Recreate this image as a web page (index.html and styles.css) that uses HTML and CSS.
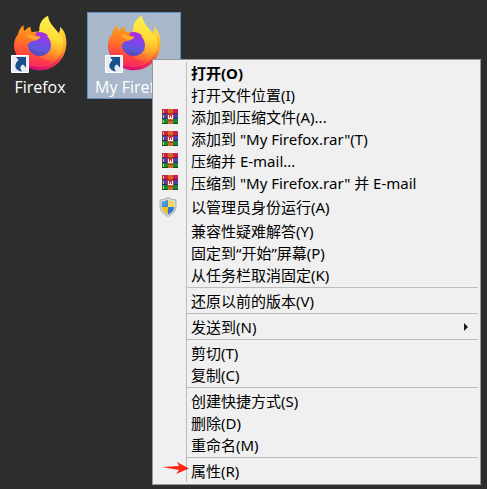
FILE: index.html
```html
<!DOCTYPE html>
<html lang="zh-CN">
<head>
<meta charset="utf-8">
<meta name="viewport" content="width=device-width, initial-scale=1">
<title>桌面</title>
<link rel="stylesheet" href="styles.css">
</head>
<body>
<svg class="defs" width="0" height="0" aria-hidden="true">
  <defs>
    <linearGradient id="fx-flame" gradientUnits="userSpaceOnUse" x1="160" y1="50" x2="110" y2="205">
      <stop offset="0" stop-color="#fff44f"/>
      <stop offset=".38" stop-color="#ffdc38"/>
      <stop offset=".6" stop-color="#ffa428"/>
      <stop offset=".8" stop-color="#ff5a38"/>
      <stop offset="1" stop-color="#fa2860"/>
    </linearGradient>
    <linearGradient id="fx-rim" gradientUnits="userSpaceOnUse" x1="190" y1="85" x2="120" y2="211">
      <stop offset="0" stop-color="#ffe23c"/>
      <stop offset=".4" stop-color="#ff9a25"/>
      <stop offset=".65" stop-color="#f8384e"/>
      <stop offset="1" stop-color="#da1070"/>
    </linearGradient>
    <linearGradient id="fx-orb" x1=".65" y1="0" x2=".4" y2="1">
      <stop offset="0" stop-color="#b52be0"/>
      <stop offset=".35" stop-color="#8740ea"/>
      <stop offset=".7" stop-color="#5f58e0"/>
      <stop offset="1" stop-color="#5a48b0"/>
    </linearGradient>
    <linearGradient id="fx-head" gradientUnits="userSpaceOnUse" x1="85" y1="80" x2="70" y2="190">
      <stop offset="0" stop-color="#ff9c1c"/>
      <stop offset=".35" stop-color="#ff7b24"/>
      <stop offset=".7" stop-color="#ff4c3c"/>
      <stop offset="1" stop-color="#fb2d58"/>
    </linearGradient>
    <linearGradient id="shield-blue" x1="0" y1="0" x2="1" y2="1">
      <stop offset="0" stop-color="#5da6e4"/>
      <stop offset="1" stop-color="#1766b8"/>
    </linearGradient>
    <symbol id="firefox" viewBox="36 42 168 171">
      <path fill="url(#fx-rim)" d="M150 70L176 99Q183 90 180 80C195 92 200 113 199 133C197 178 163 211 120 211C77 211 42 177 42 132L120 110Z"/>
      <path fill="url(#fx-flame)" d="M144 47C125 57 117 71 118 92L90 120L60 180C78 196 98 201 122 200C160 199 190 168 190 132C190 119 186 106 178 97Q181 106 179 112C171 82 148 78 144 47Z"/>
      <path fill="url(#fx-head)" d="M71 75Q57 85 54 103C44 114 41 127 43 143C49 178 84 201 122 200C136 198 148 191 157 181C140 186 128 180 118 168L90 110L95 96L94 95Q90 88 91 80Q81 83 73 93Q69 84 71 75Z"/>
      <circle cx="119" cy="132" r="36" fill="url(#fx-orb)"/>
      <path fill="url(#fx-flame)" d="M118 92C128 90 142 96 150 108Q144 109 139 106C151 117 156 133 151 149L166 135L152 95L130 86Z"/>
      <path fill="url(#fx-head)" d="M90 80L94 97Q106 95 114 94Q106 99 106 105Q110 110 120 109Q121 115 112 119Q107 122 100 123Q88 124 85 134L79 130L76 98Z"/>
      <path fill="#ffb832" d="M80 106Q90 101 100 107Q108 112 120 110Q121 115 112 118Q108 120 102 120Q97 114 88 114Q85 109 80 106Z" opacity=".75"/>
    </symbol>
    <symbol id="shortcut" viewBox="0 0 18 18">
      <path fill="#e9edf3" stroke="#fff" d="M.5.5h17v17H.5z"/>
      <path fill="#17508b" d="M5 2H15V12.5L12 9.5C9 11 8.6 13 11 16.5C4 15.500 2 10 7.500 5Z"/>
    </symbol>
    <symbol id="archive" viewBox="0 0 16 16">
      <path fill="#c8204f" d="M0 0h16v5H0z"/>
      <path fill="#4143ae" d="M0 5h16v5H0z"/>
      <path fill="#168637" d="M0 10h16v5H0z"/>
      <path fill="#811532" d="M0 4h16v1H0z"/>
      <path fill="#252474" d="M0 9h16v1H0z"/>
      <path fill="#08521c" d="M0 14h16v1H0z"/>
      <path fill="#efbd31" d="M1 1h1v3H1zM1 6h1v3H1zM1 11h1v3H1z"/>
      <path fill="#d86621" d="M6 0h5v15H6z"/>
      <path fill="#a94119" d="M6 4h5v1H6zM6 11h5v1H6z"/>
      <path fill="#c62e43" d="M5 5h7v5H5z"/>
      <path fill="#fff" d="M6 6h1v3h1V7h1v2h1V6h1v4H6z"/>
    </symbol>
    <symbol id="shield" viewBox="0 0 18 20">
      <path fill="#d5dce1" stroke="#8b989f" stroke-width=".7" d="M9 .5Q13 3 17 3V9Q17 16 9 19.5Q1 16 1 9V3Q5 3 9 .5Z"/>
      <path fill="url(#shield-blue)" d="M9 2.5V10H2.7V4.5Q6 4.3 9 2.5ZM9 10H15.3Q15 15 9 17.6Z"/>
      <path fill="#f9d65b" d="M9 2.5Q12 4.3 15.3 4.5V10H9Z"/>
      <path fill="#f2bd2d" d="M2.7 10H9V17.6Q3.5 15 2.7 10Z"/>
    </symbol>
  </defs>
</svg>

<main class="desktop">
  <button class="shortcut" type="button">
    <span class="picture">
      <svg class="logo"><use href="#firefox"/></svg>
      <svg class="badge"><use href="#shortcut"/></svg>
    </span>
    <span class="name">Firefox</span>
  </button>
  <button class="shortcut selected" type="button">
    <span class="picture">
      <svg class="logo"><use href="#firefox"/></svg>
      <svg class="badge"><use href="#shortcut"/></svg>
    </span>
    <span class="name">My Firefox</span>
  </button>
</main>

<div class="menu" role="menu">
  <div class="group">
    <button class="item default" role="menuitem"><span class="icon"></span><span class="label">打开(O)</span></button>
    <button class="item" role="menuitem"><span class="icon"></span><span class="label">打开文件位置(I)</span></button>
    <button class="item" role="menuitem"><span class="icon"><svg class="archive"><use href="#archive"/></svg></span><span class="label">添加到压缩文件(A)...</span></button>
    <button class="item" role="menuitem"><span class="icon"><svg class="archive"><use href="#archive"/></svg></span><span class="label">添加到 "My Firefox.rar"(T)</span></button>
    <button class="item" role="menuitem"><span class="icon"><svg class="archive"><use href="#archive"/></svg></span><span class="label">压缩并 E-mail...</span></button>
    <button class="item" role="menuitem"><span class="icon"><svg class="archive"><use href="#archive"/></svg></span><span class="label">压缩到 "My Firefox.rar" 并 E-mail</span></button>
    <button class="item tall" role="menuitem"><span class="icon"><svg class="shield"><use href="#shield"/></svg></span><span class="label">以管理员身份运行(A)</span></button>
    <button class="item" role="menuitem"><span class="icon"></span><span class="label">兼容性疑难解答(Y)</span></button>
    <button class="item" role="menuitem"><span class="icon"></span><span class="label">固定到“开始”屏幕(P)</span></button>
    <button class="item" role="menuitem"><span class="icon"></span><span class="label">从任务栏取消固定(K)</span></button>
  </div>
  <div class="group">
    <button class="item" role="menuitem"><span class="icon"></span><span class="label">还原以前的版本(V)</span></button>
  </div>
  <div class="group">
    <button class="item" role="menuitem" aria-haspopup="true"><span class="icon"></span><span class="label">发送到(N)</span><svg class="more" viewBox="0 0 4 8"><path d="M0 0L4 4L0 8Z" fill="#1b1b1b"/></svg></button>
  </div>
  <div class="group">
    <button class="item" role="menuitem"><span class="icon"></span><span class="label">剪切(T)</span></button>
    <button class="item" role="menuitem"><span class="icon"></span><span class="label">复制(C)</span></button>
  </div>
  <div class="group">
    <button class="item" role="menuitem"><span class="icon"></span><span class="label">创建快捷方式(S)</span></button>
    <button class="item" role="menuitem"><span class="icon"></span><span class="label">删除(D)</span></button>
    <button class="item" role="menuitem"><span class="icon"></span><span class="label">重命名(M)</span></button>
  </div>
  <div class="group">
    <button class="item" role="menuitem"><span class="icon"></span><span class="label">属性(R)</span><svg class="pointer" viewBox="0 0 27 12"><path d="M0 5L17 4L15 0L27 6.5L14 12L17 8Z" fill="#ff2314"/></svg></button>
  </div>
</div>
</body>
</html>
```
FILE: styles.css
```css
* {
  box-sizing: border-box;
}

body {
  margin: 0;
  min-height: 100vh;
  background: #2d2d2d;
  font-family: "Noto Sans", "Noto Sans CJK SC", sans-serif;
}

button {
  margin: 0;
  padding: 0;
  border: 0;
  background: none;
  color: inherit;
  font: inherit;
}

.defs {
  position: absolute;
}

.desktop {
  display: flex;
  align-items: flex-start;
  gap: 7px;
  padding-top: 12px;
}

.shortcut {
  display: flex;
  flex-direction: column;
  align-items: center;
  width: 80px;
  padding: 1px 0;
  border: 1px solid transparent;
  color: #fff;
  font-family: "Open Sans", sans-serif;
  font-size: 16px;
  line-height: 20px;
}

.shortcut.selected {
  width: 94px;
  border-color: #6292ca;
  background: #a9b7cb;
}

.picture {
  position: relative;
  height: 63px;
}

.logo {
  display: block;
  width: 56px;
  height: 57px;
}

.badge {
  position: absolute;
  left: -1px;
  bottom: 4px;
  width: 18px;
  height: 18px;
}

.name {
  white-space: nowrap;
}

.menu {
  position: absolute;
  top: 59px;
  left: 152px;
  right: 6px;
  padding: 2px;
  border: 1px solid #979797;
  background: linear-gradient(#bdbdbd, #bdbdbd) 33px 2px / 1px calc(100% - 4px) no-repeat #f0f0f0;
  color: #000;
  font-size: 15px;
  line-height: 22px;
}

.group + .group {
  margin-top: 1px;
  margin-left: 32px;
  padding-top: 2px;
  border-top: 1px solid #bdbdbd;
}

.group + .group .item {
  width: calc(100% + 32px);
  margin-left: -32px;
}

.item {
  position: relative;
  display: flex;
  align-items: center;
  width: 100%;
  height: 22px;
  text-align: left;
  white-space: nowrap;
}

.item.tall {
  height: 26px;
}

.item.default {
  font-weight: 700;
}

.icon {
  display: flex;
  flex: none;
  justify-content: center;
  width: 36px;
  padding-right: 6px;
}

.archive {
  width: 16px;
  height: 16px;
}

.shield {
  width: 18px;
  height: 20px;
  margin-right: 4px;
}

.label {
  flex: 1;
}

.more {
  width: 4px;
  height: 8px;
  margin-right: 10px;
}

.pointer {
  position: absolute;
  left: 7px;
  top: 2px;
  width: 27px;
  height: 12px;
}
```
